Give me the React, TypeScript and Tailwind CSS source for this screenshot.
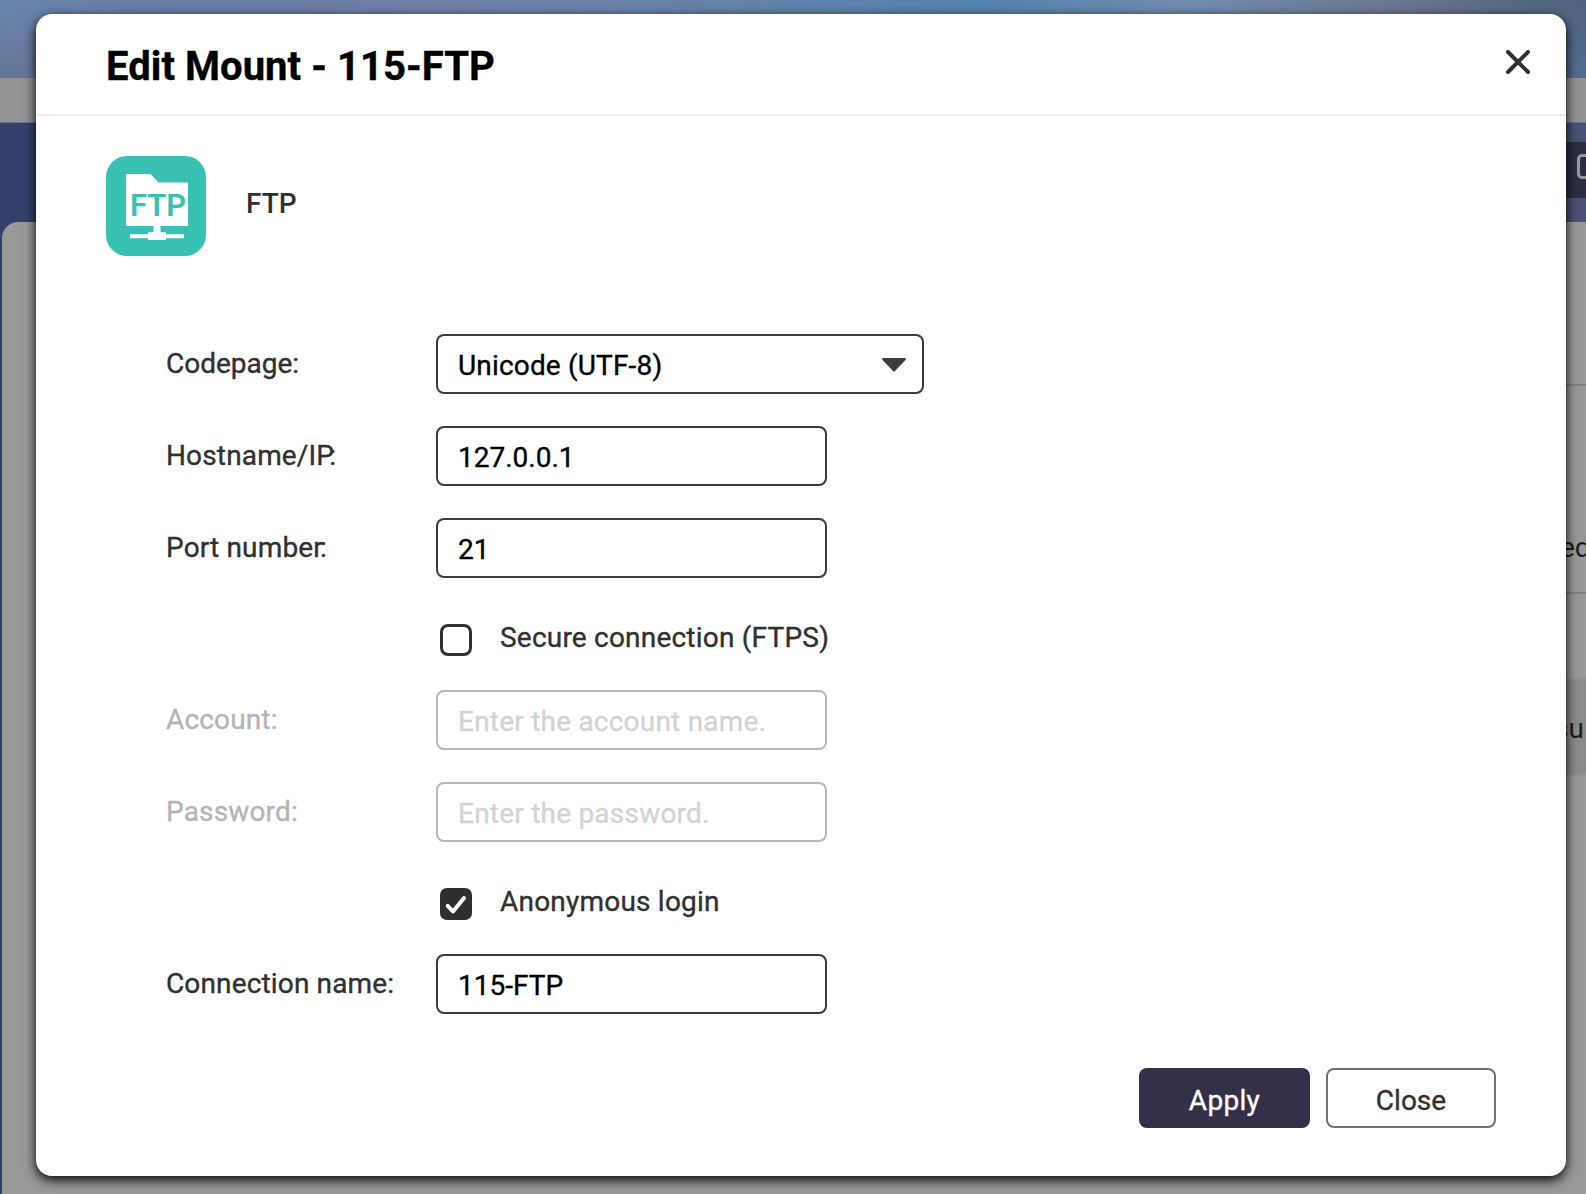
import type { ReactNode } from 'react'

function FtpIcon() {
  return (
    <svg width="100" height="100" viewBox="0 0 100 100" className="shrink-0">
      <rect width="100" height="100" rx="21" fill="#38c0b2" />
      <path d="M20 18h24.500l8 8.500H82V70H54.500v6.300H60V78.300h18v4H60V84H42v-1.700H24v-4h18V76.300h5.500V70H20z" fill="#fff" />
      <text
        x="24"
        y="60"
        textLength="56"
        lengthAdjust="spacingAndGlyphs"
        className="font-['Roboto',sans-serif] text-[31px] font-semibold"
        fill="#38c0b2"
      >
        FTP
      </text>
    </svg>
  )
}

function Row({
  label,
  muted,
  colonClass = '',
  tracking = 'tracking-[0.15px]',
  className = 'mb-8',
  children,
}: {
  label: string
  muted?: boolean
  colonClass?: string
  tracking?: string
  className?: string
  children: ReactNode
}) {
  return (
    <div className={`flex h-[60px] items-center ${className}`}>
      <div className={`w-[270px] shrink-0 pb-[1px] ${tracking} ${muted ? 'text-[#b4b4b4]' : 'text-[#303030]'}`}>
        {label}
        <span className={colonClass}>:</span>
      </div>
      {children}
    </div>
  )
}

function Field({ value, placeholder, disabled }: { value?: string; placeholder?: string; disabled?: boolean }) {
  return (
    <input
      readOnly
      value={value ?? ''}
      placeholder={placeholder}
      disabled={disabled}
      className="h-[60px] w-[391px] rounded-lg border-2 border-[#3c3c3c] bg-white px-5 pt-[2px] text-black placeholder:tracking-[0.22px] placeholder:text-[#d2d2d2] disabled:border-[#b8b8b8]"
    />
  )
}

function CheckRow({ label, checked }: { label: string; checked?: boolean }) {
  return (
    <div className="mb-[34px] ml-[274px] flex h-8 items-center">
      {checked ? (
        <svg width="32" height="32" viewBox="0 0 32 32" className="shrink-0">
          <rect width="32" height="32" rx="7" fill="#2e2e2e" />
          <path d="M7.700 17.800l5.300 5.700L24 10" fill="none" stroke="#fff" strokeWidth="4" strokeLinecap="round" strokeLinejoin="round" />
        </svg>
      ) : (
        <span className="size-8 shrink-0 rounded-[8px] border-3 border-[#303030]" />
      )}
      <span className="ml-7 pb-[4px] tracking-[0.21px] whitespace-nowrap text-[#303030]">{label}</span>
    </div>
  )
}

function Backdrop() {
  return (
    <div className="absolute inset-0 flex flex-col bg-[#34406b] [-webkit-text-stroke:0]">
      <div className="h-[78px] shrink-0 bg-[linear-gradient(to_right,#6985ac_0%,#6a7fa6_10%,#727fa5_28%,#6484ad_48%,#5583b2_62%,#738dad_75%,#6d7792_88%,#566880_96%,#506480_100%)]">
        <div className="h-full bg-[linear-gradient(to_right,rgba(100,116,148,0.85),rgba(84,112,152,0.6))] [mask-image:linear-gradient(to_bottom,transparent,black)]" />
      </div>
      <div className="h-11 shrink-0 bg-[#929394]" />
      <div className="flex h-[100px] shrink-0 justify-end border-t border-[#6a7191] bg-[linear-gradient(to_right,#34406b,#4a5275)]">
        <div className="mt-[19px] h-14 w-10 overflow-hidden bg-[#2c2e44] pt-3 pl-[31px]">
          <div className="h-[25px] w-6 rounded-[5px] border-3 border-[#9a9a9a]" />
        </div>
      </div>
      <div className="ml-[2px] flex flex-1 flex-col items-end overflow-hidden rounded-tl-2xl bg-[#999]">
        <div className="h-[164px] w-20 shrink-0 border-b-2 border-[#808080]" />
        <div className="flex h-[208px] w-20 shrink-0 items-end justify-end border-b-2 border-[#808080] pb-[28px] text-[#1c1c1c]">
          <span className="w-[26px] leading-8 whitespace-nowrap">ed</span>
        </div>
        <div className="h-[84px] shrink-0" />
        <div className="flex h-[98px] w-20 shrink-0 items-center justify-end border-y-2 border-[#929292] bg-[#8b8b8d] text-[#1c1c1c]">
          <span className="w-[32px] pt-[4px] leading-8 whitespace-nowrap">su</span>
        </div>
      </div>
    </div>
  )
}

export default function App() {
  return (
    <div className="relative h-[1194px] w-[1586px] overflow-hidden pt-[14px] pl-9 font-['Roboto',sans-serif] text-[28px] [-webkit-text-stroke:0.35px]">
      <Backdrop />
      <section className="relative flex h-[1162px] w-[1530px] flex-col rounded-2xl bg-white shadow-[0_4px_12px_0_rgba(0,0,0,1)]">
        <header className="flex h-[102px] shrink-0 items-center border-b-2 border-[#eee] pr-9 pl-[70px]">
          <h1 className="flex-1 pt-[6px] text-[40px] font-bold tracking-[0.05px] text-black">Edit Mount - 115-FTP</h1>
          <button aria-label="Close dialog" className="mb-1">
            <svg width="24" height="24" viewBox="0 0 24 24" fill="none" stroke="#303030" strokeWidth="4" strokeLinecap="round">
              <path d="M2 2l20 20M22 2L2 22" />
            </svg>
          </button>
        </header>
        <div className="mt-10 ml-[70px] flex h-[100px] items-center">
          <FtpIcon />
          <span className="ml-10 pb-[4px] font-medium text-[#303030] [-webkit-text-stroke:0]">FTP</span>
        </div>
        <form className="mt-[78px] ml-[130px]">
          <Row label="Codepage" tracking="tracking-normal">
            <div className="flex h-[60px] w-[488px] items-center justify-between rounded-lg border-2 border-[#3c3c3c] pr-4 pl-5 text-black">
              <span className="pt-[3px] tracking-[0.17px]">Unicode (UTF-8)</span>
              <svg width="24" height="14" viewBox="0 0 24 14" fill="#3c3c3c" className="mt-[2px]">
                <path d="M1 0h22q1.500.7.500 2L13 13q-1 1-2 0L.5 2Q-.5.700 1 0z" />
              </svg>
            </div>
          </Row>
          <Row label="Hostname/IP" colonClass="-ml-[5px]">
            <Field value="127.0.0.1" />
          </Row>
          <Row label="Port number" colonClass="-ml-[3px]" className="mb-[46px]">
            <Field value="21" />
          </Row>
          <CheckRow label="Secure connection (FTPS)" />
          <Row label="Account" muted>
            <Field placeholder="Enter the account name." disabled />
          </Row>
          <Row label="Password" muted className="mb-[46px]">
            <Field placeholder="Enter the password." disabled />
          </Row>
          <CheckRow label="Anonymous login" checked />
          <Row label="Connection name" className="mb-0">
            <Field value="115-FTP" />
          </Row>
        </form>
        <footer className="mt-[54px] flex justify-end gap-4 pr-[70px]">
          <button className="h-[60px] w-[171px] rounded-lg bg-[#332f48] pt-[6px] tracking-[0.3px] text-white">Apply</button>
          <button className="h-[60px] w-[170px] rounded-lg border-2 border-[#707070] pt-[6px] text-[#303030]">Close</button>
        </footer>
      </section>
    </div>
  )
}
